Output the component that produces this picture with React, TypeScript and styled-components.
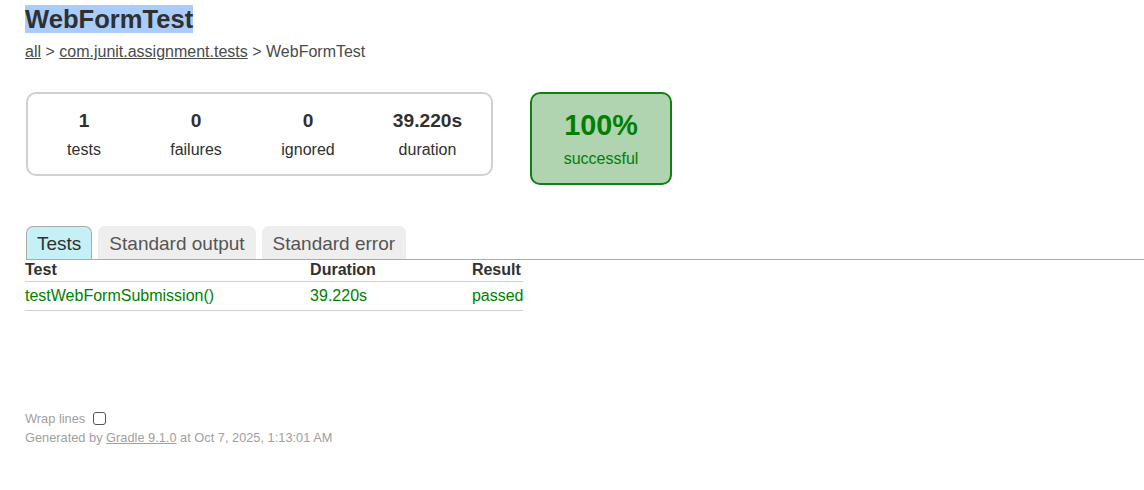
import styled, { createGlobalStyle } from 'styled-components';

const GlobalStyle = createGlobalStyle`
  body {
    margin: 0;
    padding: 0;
    background: #fff;
    color: #303030;
    font-family: "Liberation Sans", Arial, sans-serif;
    font-size: 16px;
  }
`;

const Content = styled.div`
  padding: 5px 25px 30px 25px;
`;

const Title = styled.h1`
  margin: 0 0 10px 0;
  font-size: 25.6px;
  font-weight: bold;
  line-height: 28px;
  white-space: nowrap;

  span {
    background: #a8cdfd;
  }
`;

const Breadcrumbs = styled.div`
  color: #4a4a4a;
  line-height: 18px;

  a {
    color: #4a4a4a;
    text-decoration: underline;
  }
`;

const Summary = styled.div`
  display: flex;
  align-items: flex-start;
  gap: 37px;
  margin: 31px 0 0 1px;
`;

const SummaryGroup = styled.div`
  display: flex;
  gap: 2px;
  padding: 0 1px;
  border: solid 2px #d0d0d0;
  border-radius: 10px;
`;

const InfoBox = styled.div<{ $wide?: boolean }>`
  width: ${(p) => (p.$wide ? 125 : 110)}px;
  padding: 16px 0 15px 0;
  text-align: center;
  line-height: 18px;
`;

const Counter = styled.div`
  font-size: 19.2px;
  font-weight: bold;
  line-height: 22px;
  margin-bottom: 9px;
`;

const SuccessRate = styled.div`
  width: 138px;
  padding: 15px 0;
  text-align: center;
  line-height: 18px;
  color: #008000;
  background: #b0d4b0;
  border: solid 2px #108010;
  border-radius: 10px;
`;

const Percent = styled.div`
  font-size: 28.8px;
  font-weight: bold;
  line-height: 33px;
  margin-bottom: 8px;
`;

const TabLinks = styled.ul`
  display: flex;
  gap: 6px;
  list-style: none;
  margin: 41px -25px 0 1px;
  padding: 0;
  border-bottom: solid 1px #aaa;
`;

const Tab = styled.li<{ $selected?: boolean }>`
  padding: 6px 10px 4px 10px;
  border: solid 1px ${(p) => (p.$selected ? '#aaa' : '#eee')};
  border-bottom: none;
  border-radius: 7px 7px 0 0;
  background: ${(p) => (p.$selected ? '#c5f0f5' : '#eee')};
  color: ${(p) => (p.$selected ? '#303030' : '#555')};
  font-size: 19px;
  line-height: 22px;
`;

const Table = styled.table`
  border-collapse: collapse;
  min-width: 350px;
  border-bottom: solid 1px #d0d0d0;

  th {
    text-align: left;
    white-space: nowrap;
    padding: 1px 0 2px 96px;
    line-height: 18px;
    border-bottom: solid 1px #d0d0d0;
  }

  td {
    white-space: nowrap;
    padding: 6px 0 6px 96px;
    line-height: 16px;
    color: #008000;
  }

  th:first-child,
  td:first-child {
    padding-left: 0;
  }
`;

const Footer = styled.div`
  margin-top: 100px;
  font-size: 12.8px;
  line-height: 15px;
  color: #a0a0a0;
  white-space: nowrap;

  a {
    color: #a0a0a0;
    text-decoration: underline;
  }
`;

const WrapToggle = styled.div`
  display: flex;
  align-items: center;
  gap: 8px;
  margin-bottom: 4px;
`;

const Checkbox = styled.input`
  appearance: none;
  width: 13px;
  height: 13px;
  margin: 0;
  border: solid 1px #555;
  border-radius: 3px;
  background: #fff;
`;

export default function App() {
  return (
    <>
      <GlobalStyle />
      <Content>
        <Title>
          <span>WebFormTest</span>
        </Title>
        <Breadcrumbs>
          <a href="#">all</a> &gt; <a href="#">com.junit.assignment.tests</a> &gt; WebFormTest
        </Breadcrumbs>

        <Summary>
          <SummaryGroup>
            <InfoBox>
              <Counter>1</Counter>
              <div>tests</div>
            </InfoBox>
            <InfoBox>
              <Counter>0</Counter>
              <div>failures</div>
            </InfoBox>
            <InfoBox>
              <Counter>0</Counter>
              <div>ignored</div>
            </InfoBox>
            <InfoBox $wide>
              <Counter>39.220s</Counter>
              <div>duration</div>
            </InfoBox>
          </SummaryGroup>
          <SuccessRate>
            <Percent>100%</Percent>
            <div>successful</div>
          </SuccessRate>
        </Summary>

        <TabLinks>
          <Tab $selected>Tests</Tab>
          <Tab>Standard output</Tab>
          <Tab>Standard error</Tab>
        </TabLinks>

        <Table>
          <thead>
            <tr>
              <th>Test</th>
              <th>Duration</th>
              <th>Result</th>
            </tr>
          </thead>
          <tbody>
            <tr>
              <td>testWebFormSubmission()</td>
              <td>39.220s</td>
              <td>passed</td>
            </tr>
          </tbody>
        </Table>

        <Footer>
          <WrapToggle>
            <span>Wrap lines</span>
            <Checkbox type="checkbox" />
          </WrapToggle>
          <div>
            Generated by <a href="#">Gradle 9.1.0</a> at Oct 7, 2025, 1:13:01 AM
          </div>
        </Footer>
      </Content>
    </>
  );
}
